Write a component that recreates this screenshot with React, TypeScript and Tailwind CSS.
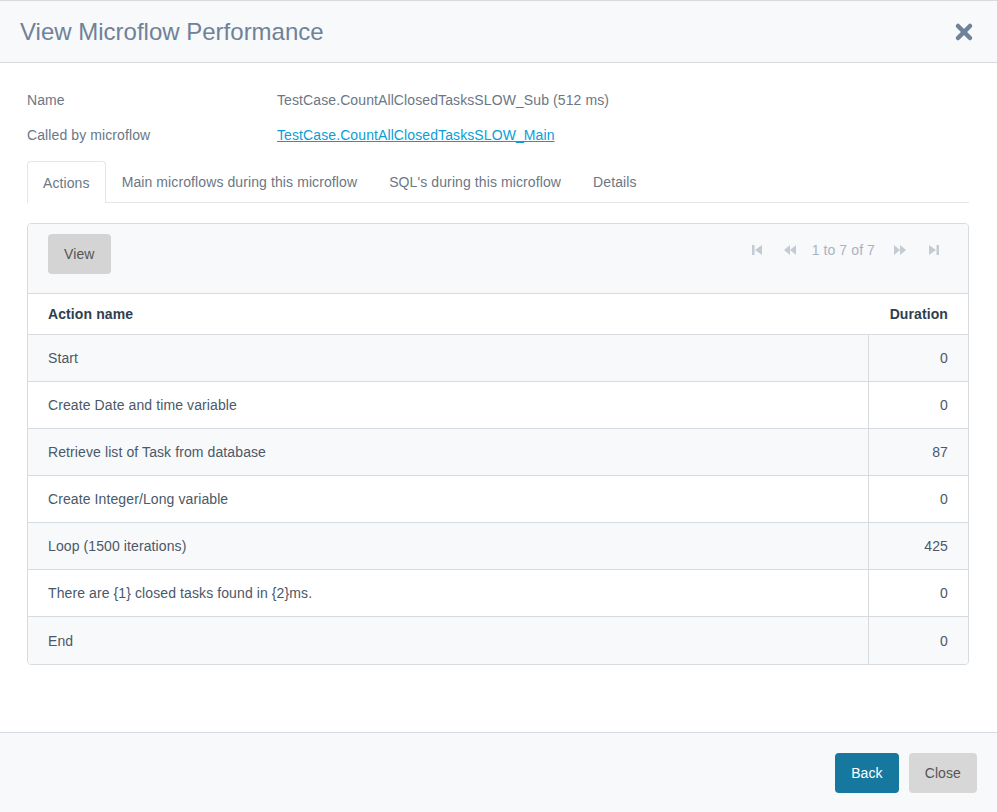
import { X } from 'lucide-react';

const rows = [
  { name: 'Start', duration: 0 },
  { name: 'Create Date and time variable', duration: 0 },
  { name: 'Retrieve list of Task from database', duration: 87 },
  { name: 'Create Integer/Long variable', duration: 0 },
  { name: 'Loop (1500 iterations)', duration: 425 },
  { name: 'There are {1} closed tasks found in {2}ms.', duration: 0 },
  { name: 'End', duration: 0 },
];

const tabs = ['Actions', 'Main microflows during this microflow', "SQL's during this microflow", 'Details'];

function PagerIcon({ kind }: { kind: 'first' | 'prev' | 'next' | 'last' }) {
  return (
    <svg width="12" height="12" viewBox="0 0 12 12" fill="#c3cbd4">
      {kind === 'first' && (
        <>
          <rect x="1" y="1" width="2.5" height="10" />
          <path d="M11 1 L4 6 L11 11 Z" />
        </>
      )}
      {kind === 'prev' && (
        <>
          <path d="M6 1 L0 6 L6 11 Z" />
          <path d="M12 1 L6 6 L12 11 Z" />
        </>
      )}
      {kind === 'next' && (
        <>
          <path d="M0 1 L6 6 L0 11 Z" />
          <path d="M6 1 L12 6 L6 11 Z" />
        </>
      )}
      {kind === 'last' && (
        <>
          <path d="M1 1 L8 6 L1 11 Z" />
          <rect x="8.5" y="1" width="2.5" height="10" />
        </>
      )}
    </svg>
  );
}

export default function App() {
  return (
    <div
      className="w-[997px] h-[812px] bg-white flex flex-col border-t border-[#d7dbe0] text-[14px] leading-5 tracking-[0.1px] text-[#555b63]"
      style={{ fontFamily: '"Liberation Sans", Arial, sans-serif' }}
    >
      <div className="h-[62px] bg-[#f8f9fb] border-b border-[#d7dbe0] flex items-center justify-between pl-5 pr-[21px] shrink-0">
        <h1 className="text-[24px] leading-8 tracking-normal text-[#6e8298]">View Microflow Performance</h1>
        <X size={24} strokeWidth={4.5} className="text-[#6e8298]" />
      </div>

      <div className="flex-1 pl-[27px] pr-[28px] pt-[27px]">
        <div className="grid grid-cols-[250px_1fr] gap-y-[15px] text-[#6b7785]">
          <div>Name</div>
          <div>TestCase.CountAllClosedTasksSLOW_Sub (512 ms)</div>
          <div>Called by microflow</div>
          <div>
            <a className="text-[#0a9dd6] underline">TestCase.CountAllClosedTasksSLOW_Main</a>
          </div>
        </div>

        <div className="mt-[16px] flex border-b border-[#e3e6ea] h-[42px]">
          {tabs.map((t, i) => (
            <div
              key={t}
              className={
                i === 0
                  ? 'px-[15px] flex items-center border border-b-0 border-[#e3e6ea] rounded-t-[4px] bg-white -mb-px text-[#6b7785]'
                  : 'px-4 flex items-center text-[#6b7785]'
              }
            >
              {t}
            </div>
          ))}
        </div>

        <div className="mt-5 border border-[#d7dbe0] rounded-[4px] overflow-hidden text-[#4a5868]">
          <div className="h-[70px] bg-[#f8f9fb] border-b border-[#d7dbe0] flex items-start justify-between pl-5 pr-[28px] pt-[10px]">
            <button className="h-10 px-4 rounded-[4px] bg-[#d4d4d4] text-[#555]">View</button>
            <div className="flex items-center mt-[6px] text-[#a9b3bf]">
              <PagerIcon kind="first" />
              <span className="w-[21px]" />
              <PagerIcon kind="prev" />
              <span className="w-[16px]" />
              <span>1 to 7 of 7</span>
              <span className="w-[19px]" />
              <PagerIcon kind="next" />
              <span className="w-[22px]" />
              <PagerIcon kind="last" />
            </div>
          </div>
          <div className="h-[41px] flex items-center justify-between pl-5 pr-[20px] font-bold text-[#2f3e4e] border-b border-[#d7dbe0]">
            <span>Action name</span>
            <span>Duration</span>
          </div>
          {rows.map((r, i) => (
            <div
              key={r.name}
              className={`h-[47px] flex ${i % 2 === 0 ? 'bg-[#f8f9fb]' : 'bg-white'} ${i < rows.length - 1 ? 'border-b border-[#d7dbe0]' : ''}`}
            >
              <div className="flex-1 flex items-center px-5 border-r border-[#d7dbe0]">{r.name}</div>
              <div className="w-[99px] flex items-center justify-end pr-[20px]">{r.duration}</div>
            </div>
          ))}
        </div>
      </div>

      <div className="h-[80px] bg-[#f8f9fb] border-t border-[#d7dbe0] flex items-center justify-end gap-[10px] pr-5 shrink-0">
        <button className="h-10 px-4 rounded-[4px] bg-[#16789f] text-white">Back</button>
        <button className="h-10 px-4 rounded-[4px] bg-[#d7d7d7] text-[#555]">Close</button>
      </div>
    </div>
  );
}
